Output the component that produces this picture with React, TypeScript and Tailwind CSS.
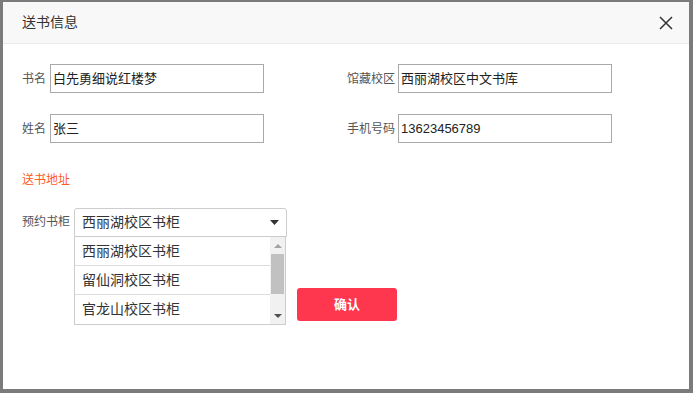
import React from "react";

const font = { fontFamily: '"Liberation Sans", "Noto Sans CJK SC", sans-serif' };

function Field({ label, value, labelW }: { label: string; value: string; labelW: string }) {
  return (
    <div className="flex items-center">
      <span className={`${labelW} text-[12px] text-[#555] leading-none`}>{label}</span>
      <div className="ml-[3px] w-[214px] h-[29px] border border-[#a9a9a9] flex items-center pl-[2px] text-[13px] text-[#222]">
        {value}
      </div>
    </div>
  );
}

export default function App() {
  return (
    <div className="w-[693px] h-[393px] bg-[#7b7b7b] pl-[3px] pt-[2px] overflow-hidden" style={font}>
      <div className="w-[686px] h-[387px] bg-white flex flex-col">
        <div className="h-[42px] bg-[#f8f8f8] border-b border-[#eaeaea] flex items-center justify-between pl-[19px] pr-[16px]">
          <span className="text-[14px] text-[#333]">送书信息</span>
          <svg width="14" height="14" viewBox="0 0 14 14">
            <path d="M1 1 L13 13 M13 1 L1 13" stroke="#333" strokeWidth="1.5" fill="none" />
          </svg>
        </div>
        <div className="pl-[19px] pt-[20px] flex flex-col">
          <div className="grid grid-cols-[325px_325px] gap-y-[21px]">
            <Field label="书名" value="白先勇细说红楼梦" labelW="w-[25px]" />
            <Field label="馆藏校区" value="西丽湖校区中文书库" labelW="w-[48px]" />
            <Field label="姓名" value="张三" labelW="w-[25px]" />
            <Field label="手机号码" value="13623456789" labelW="w-[48px]" />
          </div>
          <div className="mt-[31px] text-[12px] text-[#ff5a1f] leading-none">送书地址</div>
          <div className="mt-[22px] flex items-start">
            <span className="w-[52px] mt-[8px] text-[12px] text-[#555] leading-none">预约书柜</span>
            <div className="relative">
              <div className="w-[213px] h-[29px] border border-[#ccc] rounded-t-[3px] flex items-center justify-between pl-[7px] pr-[7px] text-[14px] text-[#333]">
                <span>西丽湖校区书柜</span>
                <svg width="9" height="5" viewBox="0 0 9 5">
                  <path d="M0 0 L9 0 L4.5 5 Z" fill="#333" />
                </svg>
              </div>
              <div className="absolute left-0 top-[29px] w-[212px] h-[88px] bg-white border border-t-0 border-[#ccc] flex">
                <div className="flex-1 flex flex-col text-[14px] text-[#333]">
                  <div className="h-[29px] border-b border-[#ddd] flex items-center pl-[7px]">西丽湖校区书柜</div>
                  <div className="h-[29px] border-b border-[#ddd] flex items-center pl-[7px]">留仙洞校区书柜</div>
                  <div className="h-[29px] flex items-center pl-[7px]">官龙山校区书柜</div>
                </div>
                <div className="w-[15px] bg-[#f1f1f1] flex flex-col items-center">
                  <div className="h-[17px] flex items-center justify-center">
                    <svg width="8" height="4" viewBox="0 0 8 4"><path d="M0 4 L8 4 L4 0 Z" fill="#a3a3a3" /></svg>
                  </div>
                  <div className="w-[13px] h-[40px] bg-[#c1c1c1]" />
                  <div className="flex-1" />
                  <div className="h-[17px] flex items-center justify-center">
                    <svg width="8" height="4" viewBox="0 0 8 4"><path d="M0 0 L8 0 L4 4 Z" fill="#505050" /></svg>
                  </div>
                </div>
              </div>
            </div>
          </div>
          <div className="mt-[51px] ml-[275px]">
            <div className="w-[100px] h-[33px] bg-[#fe374f] rounded-[3px] flex items-center justify-center text-white text-[13px] font-bold">
              确认
            </div>
          </div>
        </div>
      </div>
    </div>
  );
}
